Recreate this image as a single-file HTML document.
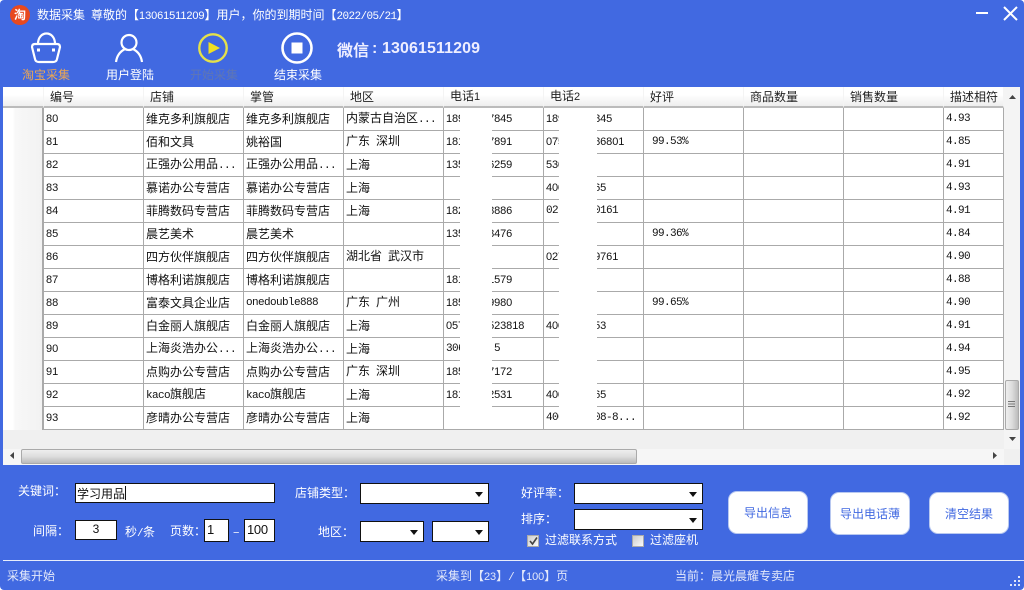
<!DOCTYPE html>
<html lang="zh"><head><meta charset="utf-8"><title>数据采集</title>
<style>
*{box-sizing:border-box}
html,body{margin:0;padding:0;background:#fff}
body{width:1024px;height:590px;overflow:hidden;position:relative}
#w{position:absolute;inset:0;background:#4169E1;border-radius:4px;overflow:hidden;font:12px/14px "WenQuanYi Zen Hei","Noto Sans CJK SC","Liberation Sans",sans-serif;color:#fff}
.a{position:absolute;white-space:nowrap}
.m{font-family:"Liberation Sans",sans-serif;font-size:11px;letter-spacing:-.1px}
.k{font-family:"Liberation Mono",monospace;font-size:11px;letter-spacing:-.6px}
svg{position:absolute;overflow:visible}
#panel{position:absolute;left:3px;top:87px;width:1017px;height:378px;background:#f0f0f0;overflow:hidden}
table{position:absolute;left:0;top:0;border-collapse:separate;border-spacing:0;table-layout:fixed;width:1001px;font-size:12px;color:#111}
th{height:21px;padding:0 0 0 6px;font-weight:normal;text-align:left;background:linear-gradient(#fff,#fff 40%,#eee);border-right:1px solid #f4f4f4;border-bottom:2px solid #bbb;overflow:hidden;white-space:nowrap;color:#222}
td{height:23px;padding:0 0 0 2px;background:#fff;border-right:1px solid #aaa;border-bottom:1px solid #aaa;overflow:hidden;white-space:nowrap}
td.h{background:linear-gradient(90deg,#fff,#fff 25%,#f8f8f8 32%,#f2f2f2);border-bottom:0;border-right:2px solid #aaa}
td.n{font:11px "Liberation Sans",sans-serif}
td.p{padding-left:8px}
.mask{position:absolute;top:21px;height:321px;background:#fff}
.ip{position:absolute;background:#fff;border:1px solid #111;color:#111}
.sel:after{content:"";position:absolute;right:5px;top:8px;border:4px solid transparent;border-top:5px solid #111;border-bottom:0}
.btn{position:absolute;background:#fff;border-radius:9px;border:1px solid #b8c8f0;color:#4169E1;text-align:center;line-height:41px}
.cb{position:absolute;width:12px;height:12px;background:linear-gradient(135deg,#ccc,#fafafa);border:1px solid #aaa}
</style></head><body><div id="w">

<svg style="left:10px;top:5px" width="20" height="20"><circle cx="10" cy="10" r="10" fill="#e8491f"/></svg>
<div class="a" style="left:14px;top:8px;font-weight:bold">淘</div>
<div class="a" style="left:37px;top:8px">数据采集<span class="k"> </span>尊敬的【<span class="m">13061511209</span>】用户，你的到期时间【<span class="k">2022/05/21</span>】</div>
<svg style="left:976px;top:6px" width="42" height="16" fill="none" stroke="#fff"><path d="M0 7H12" stroke-width="2"/><path d="M28 1L41 14M41 1L28 14" stroke-width="2"/></svg>

<svg style="left:30px;top:33px" width="32" height="32" fill="none" stroke="#fff" stroke-width="2.2"><path d="M8 11C8 -3 25 -3 25 11"/><path d="M2 14Q2 11 5 11H27Q30 11 30 14L27 26Q26.500 29 23 29H9Q5.500 29 5 26Z"/><rect x="7" y="15.500" width="3" height="3" fill="#fff" stroke="none"/><rect x="22" y="15.500" width="3" height="3" fill="#fff" stroke="none"/></svg>
<svg style="left:114px;top:33px" width="32" height="32" fill="none" stroke="#fff" stroke-width="2.200"><circle cx="15" cy="9.500" r="7.500"/><path d="M2 29C3 22 7 18 11 16M28 29C27 22 23 18 19 16"/></svg>
<svg style="left:198px;top:33px" width="30" height="30"><circle cx="15" cy="15" r="13.700" fill="none" stroke="#e4e14a" stroke-width="2.400"/><path d="M10.500 9L22 15L10.500 21Z" fill="#f0e020"/></svg>
<svg style="left:280.500px;top:32px" width="32" height="32"><circle cx="16" cy="16" r="14.500" fill="none" stroke="#fff" stroke-width="2.600"/><rect x="10.500" y="10.500" width="11" height="11" fill="#fff"/></svg>
<div class="a" style="left:22px;top:68px;color:#eda752">淘宝采集</div>
<div class="a" style="left:106px;top:68px">用户登陆</div>
<div class="a" style="left:190px;top:68px;color:#5f76b4">开始采集</div>
<div class="a" style="left:274px;top:68px">结束采集</div>
<div class="a" style="left:337px;top:40px;font-size:16px;line-height:18px;font-weight:bold;color:#eef">微信</div>
<div class="a" style="left:372px;top:40px;font:bold 16px/18px 'Liberation Sans',sans-serif;color:#eef">:</div>
<div class="a" style="left:382px;top:40px;font:bold 16px/18px 'Liberation Sans',sans-serif;letter-spacing:.1px;color:#eef">13061511209</div>

<div id="panel">
<table>
<colgroup><col style="width:41px"><col style="width:100px"><col style="width:100px"><col style="width:100px"><col style="width:100px"><col style="width:100px"><col style="width:100px"><col style="width:100px"><col style="width:100px"><col style="width:100px"><col style="width:60px"></colgroup>
<tr><th></th><th>编号</th><th>店铺</th><th>掌管</th><th>地区</th><th>电话<span class="m">1</span></th><th>电话<span class="m">2</span></th><th>好评</th><th>商品数量</th><th>销售数量</th><th>描述相符</th></tr>
<tr><td class="h"></td><td class="n">80</td><td>维克多利旗舰店</td><td>维克多利旗舰店</td><td>内蒙古自治区<span class="k">...</span></td><td class="m">18900007845</td><td class="m">18900008845</td><td></td><td></td><td></td><td class="k">4.93</td></tr>
<tr><td class="h"></td><td class="n">81</td><td>佰和文具</td><td>姚裕国</td><td>广东<span class="k"> </span>深圳</td><td class="m">18100007891</td><td class="m">0750000086801</td><td class="p k">99.53%</td><td></td><td></td><td class="k">4.85</td></tr>
<tr><td class="h"></td><td class="n">82</td><td>正强办公用品<span class="k">...</span></td><td>正强办公用品<span class="k">...</span></td><td>上海</td><td class="m">13500006259</td><td class="m">530</td><td></td><td></td><td></td><td class="k">4.91</td></tr>
<tr><td class="h"></td><td class="n">83</td><td>慕诺办公专营店</td><td>慕诺办公专营店</td><td>上海</td><td></td><td class="m">4000000365</td><td></td><td></td><td></td><td class="k">4.93</td></tr>
<tr><td class="h"></td><td class="n">84</td><td>菲腾数码专营店</td><td>菲腾数码专营店</td><td>上海</td><td class="m">18200008886</td><td class="k">02 000000161</td><td></td><td></td><td></td><td class="k">4.91</td></tr>
<tr><td class="h"></td><td class="n">85</td><td>晨艺美术</td><td>晨艺美术</td><td></td><td class="m">13500008476</td><td></td><td class="p k">99.36%</td><td></td><td></td><td class="k">4.84</td></tr>
<tr><td class="h"></td><td class="n">86</td><td>四方伙伴旗舰店</td><td>四方伙伴旗舰店</td><td>湖北省<span class="k"> </span>武汉市</td><td></td><td class="m">027000009761</td><td></td><td></td><td></td><td class="k">4.90</td></tr>
<tr><td class="h"></td><td class="n">87</td><td>博格利诺旗舰店</td><td>博格利诺旗舰店</td><td></td><td class="m">18100001579</td><td></td><td></td><td></td><td></td><td class="k">4.88</td></tr>
<tr><td class="h"></td><td class="n">88</td><td>富泰文具企业店</td><td class="k">onedouble888</td><td>广东<span class="k"> </span>广州</td><td class="m">18500009980</td><td></td><td class="p k">99.65%</td><td></td><td></td><td class="k">4.90</td></tr>
<tr><td class="h"></td><td class="n">89</td><td>白金丽人旗舰店</td><td>白金丽人旗舰店</td><td>上海</td><td class="m">0570000523818</td><td class="m">4000000353</td><td></td><td></td><td></td><td class="k">4.91</td></tr>
<tr><td class="h"></td><td class="n">90</td><td>上海炎浩办公<span class="k">...</span></td><td>上海炎浩办公<span class="k">...</span></td><td>上海</td><td class="k">3060000 5</td><td></td><td></td><td></td><td></td><td class="k">4.94</td></tr>
<tr><td class="h"></td><td class="n">91</td><td>点购办公专营店</td><td>点购办公专营店</td><td>广东<span class="k"> </span>深圳</td><td class="m">18500007172</td><td></td><td></td><td></td><td></td><td class="k">4.95</td></tr>
<tr><td class="h"></td><td class="n">92</td><td><span class="k">kaco</span>旗舰店</td><td><span class="k">kaco</span>旗舰店</td><td>上海</td><td class="m">18100002531</td><td class="m">4000000365</td><td></td><td></td><td></td><td class="k">4.92</td></tr>
<tr><td class="h"></td><td class="n">93</td><td>彦晴办公专营店</td><td>彦晴办公专营店</td><td>上海</td><td></td><td class="k">4000000008-8...</td><td></td><td></td><td></td><td class="k">4.92</td></tr>
</table>
<div class="mask" style="left:457px;width:32px"></div>
<div class="mask" style="left:556px;width:38px"></div>

<div class="a" style="left:1001px;top:0;width:16px;height:362px;background:#f4f4f4"></div>
<svg style="left:1006px;top:8px" width="8" height="5"><path d="M0 4L3.500 0L7 4Z" fill="#444"/></svg>
<div class="a" style="left:1002px;top:293px;width:14px;height:50px;background:linear-gradient(90deg,#eee,#ddd 50%,#bbb);border:1px solid #aaa;border-radius:2px"></div>
<svg style="left:1005px;top:314px" width="8" height="8"><path d="M0 .5H7M0 3H7M0 5.500H7" stroke="#777" stroke-width="1"/></svg>
<svg style="left:1006px;top:350px" width="8" height="5"><path d="M0 0H7L3.500 4Z" fill="#444"/></svg>
<div class="a" style="left:0;top:362px;width:1001px;height:16px;background:#f6f6f6"></div>
<div class="a" style="left:18px;top:362px;width:616px;height:15px;background:linear-gradient(#eee,#ddd 50%,#bbb);border:1px solid #aaa;border-radius:2px"></div>
<svg style="left:7px;top:365px" width="5" height="8"><path d="M4 0V7L0 3.500Z" fill="#444"/></svg>
<svg style="left:990px;top:365px" width="5" height="8"><path d="M0 0V7L4 3.500Z" fill="#444"/></svg>
</div>

<div class="a" style="left:18px;top:484px">关键词：</div>
<div class="ip" style="left:75px;top:483px;width:200px;height:20px;padding:2px 0 0 1px">学习用品<span style="display:inline-block;width:1px;height:14px;background:#111;vertical-align:-2px"></span></div>
<div class="a" style="left:295px;top:486px">店铺类型：</div>
<div class="ip sel" style="left:360px;top:483px;width:129px;height:21px"></div>
<div class="a" style="left:521px;top:486px">好评率：</div>
<div class="ip sel" style="left:574px;top:483px;width:129px;height:21px"></div>
<div class="a" style="left:521px;top:512px">排序：</div>
<div class="ip sel" style="left:574px;top:509px;width:129px;height:21px"></div>

<div class="a" style="left:33px;top:524px">间隔：</div>
<div class="ip" style="left:75px;top:520px;width:42px;height:20px;text-align:center;font:12px/16px 'Liberation Sans',sans-serif">3</div>
<div class="a" style="left:125px;top:525px">秒<span class="k">/</span>条</div>
<div class="a" style="left:170px;top:524px">页数：</div>
<div class="ip" style="left:204px;top:519px;width:25px;height:23px;padding:1px 0 0 2px;font:13px/17px 'Liberation Sans',sans-serif">1</div>
<div class="a" style="left:233px;top:525px">–</div>
<div class="ip" style="left:244px;top:519px;width:31px;height:23px;padding:1px 0 0 2px;font:13px/17px 'Liberation Sans',sans-serif;letter-spacing:-.3px">100</div>
<div class="a" style="left:318px;top:525px">地区：</div>
<div class="ip sel" style="left:360px;top:521px;width:64px;height:21px"></div>
<div class="ip sel" style="left:432px;top:521px;width:57px;height:21px"></div>

<div class="cb" style="left:527px;top:535px"></div>
<svg style="left:529px;top:537px" width="9" height="9" fill="none"><path d="M1 4L3.500 7L8 0.500" stroke="#444" stroke-width="1.600"/></svg>
<div class="a" style="left:545px;top:533px">过滤联系方式</div>
<div class="cb" style="left:632px;top:535px"></div>
<div class="a" style="left:650px;top:533px">过滤座机</div>

<div class="btn" style="left:728px;top:491px;width:80px;height:43px">导出信息</div>
<div class="btn" style="left:830px;top:492px;width:80px;height:43px">导出电话薄</div>
<div class="btn" style="left:929px;top:492px;width:80px;height:42px">清空结果</div>

<div class="a" style="left:3px;top:560px;width:1021px;height:1px;background:#e8edfb"></div>
<div class="a" style="left:7px;top:569px;color:#e4e9fa">采集开始</div>
<div class="a" style="left:436px;top:569px;color:#e4e9fa">采集到【<span class="m">23</span>】<span class="k">/</span>【<span class="m">100</span>】页</div>
<div class="a" style="left:675px;top:569px;color:#e4e9fa">当前：晨光晨耀专卖店</div>
<svg style="left:1008px;top:576px" width="14" height="12" fill="#dfe6fa"><rect x="10" y="0" width="2" height="2"/><rect x="6" y="4" width="2" height="2"/><rect x="10" y="4" width="2" height="2"/><rect x="2" y="8" width="2" height="2"/><rect x="6" y="8" width="2" height="2"/><rect x="10" y="8" width="2" height="2"/></svg>
</div></body></html>
